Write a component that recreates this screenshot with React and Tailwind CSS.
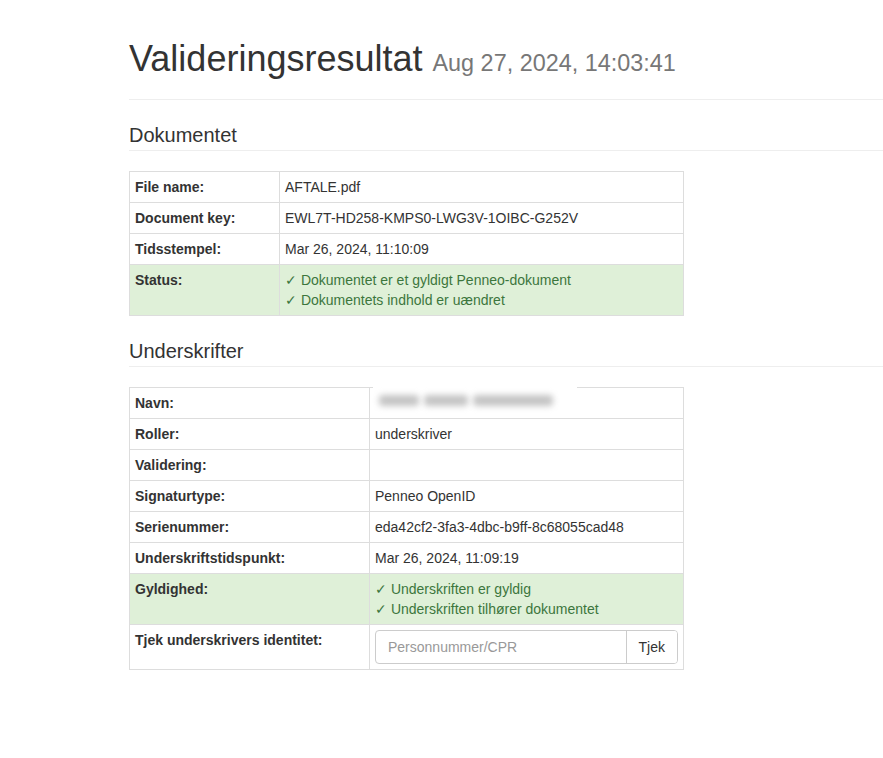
import React from "react";

const font = { fontFamily: '"Liberation Sans", Arial, Helvetica, sans-serif' };

const Row = ({ label, children, success, labelWidth }) => (
  <tr className={success ? "bg-[#dff0d8]" : ""}>
    <td className={`border border-[#ddd] px-[5px] py-[5px] align-top font-bold text-[#333] ${labelWidth}`}>{label}</td>
    <td className={`border border-[#ddd] px-[5px] py-[5px] align-top ${success ? "text-[#3c763d]" : "text-[#333]"}`}>{children}</td>
  </tr>
);

const SectionTitle = ({ children }) => (
  <h3 className="mt-[24px] pb-[4px] border-b border-[#eee] text-[20px] leading-[22px] text-[#333]">{children}</h3>
);

const BlurredName = () => (
  <div className="relative h-[20px]">
    <div className="absolute left-[-2px] top-[-6px] w-[204px] h-[27px] bg-white flex items-center gap-[5px] pl-[6px]">
      <span className="block h-[11px] w-[40px] bg-[#c4c4c4] rounded-sm blur-[3px]" />
      <span className="block h-[11px] w-[44px] bg-[#c4c4c4] rounded-sm blur-[3px]" />
      <span className="block h-[11px] w-[80px] bg-[#c4c4c4] rounded-sm blur-[3px]" />
    </div>
  </div>
);

export default function App() {
  return (
    <div className="min-h-screen bg-white text-[14px] leading-[20px] text-[#333]" style={font}>
      <div className="pl-[129px] pt-[39px] pb-[80px]">
        <div className="border-b border-[#eee] pb-[20px]">
          <h1 className="text-[36px] leading-[40px] text-[#333] whitespace-nowrap">
            Valideringsresultat{" "}
            <span className="text-[23.4px] leading-[20px] text-[#777]">Aug 27, 2024, 14:03:41</span>
          </h1>
        </div>

        <SectionTitle>Dokumentet</SectionTitle>
        <table className="mt-[20px] w-[555px] border-collapse">
          <tbody>
            <Row label="File name:" labelWidth="w-[150px]">AFTALE.pdf</Row>
            <Row label="Document key:" labelWidth="w-[150px]">EWL7T-HD258-KMPS0-LWG3V-1OIBC-G252V</Row>
            <Row label="Tidsstempel:" labelWidth="w-[150px]">Mar 26, 2024, 11:10:09</Row>
            <Row label="Status:" labelWidth="w-[150px]" success>
              <div>✓ Dokumentet er et gyldigt Penneo-dokument</div>
              <div>✓ Dokumentets indhold er uændret</div>
            </Row>
          </tbody>
        </table>

        <SectionTitle>Underskrifter</SectionTitle>
        <table className="mt-[20px] w-[555px] border-collapse">
          <tbody>
            <Row label="Navn:" labelWidth="w-[240px]"><BlurredName /></Row>
            <Row label="Roller:" labelWidth="w-[240px]">underskriver</Row>
            <Row label="Validering:" labelWidth="w-[240px]"><span>&nbsp;</span></Row>
            <Row label="Signaturtype:" labelWidth="w-[240px]">Penneo OpenID</Row>
            <Row label="Serienummer:" labelWidth="w-[240px]">eda42cf2-3fa3-4dbc-b9ff-8c68055cad48</Row>
            <Row label="Underskriftstidspunkt:" labelWidth="w-[240px]">Mar 26, 2024, 11:09:19</Row>
            <Row label="Gyldighed:" labelWidth="w-[240px]" success>
              <div>✓ Underskriften er gyldig</div>
              <div>✓ Underskriften tilhører dokumentet</div>
            </Row>
            <Row label="Tjek underskrivers identitet:" labelWidth="w-[240px]">
              <div className="flex h-[34px] border border-[#ccc] rounded-[4px] overflow-hidden">
                <input
                  type="text"
                  placeholder="Personnummer/CPR"
                  className="flex-1 min-w-0 px-[12px] text-[14px] text-[#555] placeholder:text-[#999] outline-none"
                  style={font}
                />
                <button className="px-[12px] border-l border-[#ccc] bg-white text-[#333] text-[14px]" style={font}>
                  Tjek
                </button>
              </div>
            </Row>
          </tbody>
        </table>
      </div>
    </div>
  );
}
